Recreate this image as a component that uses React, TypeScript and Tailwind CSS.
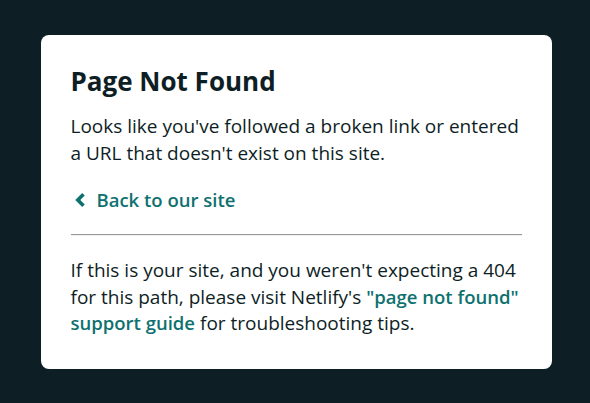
export default function App() {
  return (
    <div
      className="flex h-[403px] w-[590px] items-start justify-center bg-[#0e1e25] pl-[2px] pt-[35px]"
      style={{ fontFamily: '"Open Sans", "Noto Sans", sans-serif' }}
    >
      <div className="w-[511px] rounded-lg bg-white px-[30px] pb-[32px] pt-[30px] text-[#0e1e25]">
        <h1 className="text-[26px] font-bold leading-[32px]">Page Not Found</h1>
        <p className="mt-[16px] text-[19px] leading-[27px]">
          Looks like you've followed a broken link or entered
          <br />a URL that doesn't exist on this site.
        </p>
        <a
          href="#"
          className="mt-[19px] flex items-center gap-[11px] pl-[3px] text-[18.5px] font-semibold leading-[27px] text-[#0e7170]"
        >
          <svg width="12" height="16" viewBox="0 0 12 16" className="mt-[1px]">
            <path d="M9.5 2.2 L3.8 8 L9.5 13.8" fill="none" stroke="currentColor" strokeWidth="3.6" />
          </svg>
          Back to our site
        </a>
        <hr className="mt-[21px] border-0 border-t border-b border-t-[#999] border-b-[#eee]" />
        <p className="mt-[21px] whitespace-nowrap text-[19px] leading-[26.5px]">
          If this is your site, and you weren't expecting a 404
          <br />
          for this path, please visit Netlify's{" "}
          <a href="#" className="text-[18.5px] font-semibold text-[#0e7170]">
            "page not found"
            <br />
            support guide
          </a>{" "}
          for troubleshooting tips.
        </p>
      </div>
    </div>
  );
}
